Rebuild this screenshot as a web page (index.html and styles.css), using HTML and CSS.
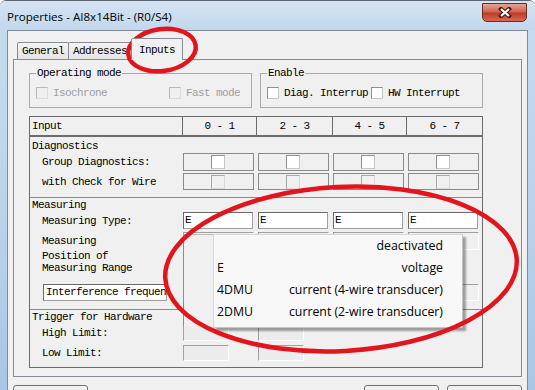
FILE: index.html
```html
<!DOCTYPE html>
<html lang="en">
<head>
  <meta charset="UTF-8" />
  <title>Properties - AI8x14Bit - (R0/S4)</title>
  <link rel="stylesheet" href="styles.css">
</head>
<body>
  <div class="window">
    <!-- Title bar -->
    <div class="titlebar">
      <span class="title">Properties - AI8x14Bit - (R0/S4)</span>
      <div class="close-btn">
        <svg width="14" height="11" viewBox="0 0 14 11">
          <path d="M3 2 L11 9 M11 2 L3 9" stroke="#4a1c16" stroke-width="4.2" stroke-linecap="square" />
          <path d="M3 2 L11 9 M11 2 L3 9" stroke="#ffffff" stroke-width="2.2" />
        </svg>
      </div>
    </div>

    <div class="client">
      <!-- Tabs -->
      <div class="tabs">
        <div class="tab">General</div>
        <div class="tab">Addresses</div>
        <div class="tab active">Inputs</div>
      </div>

      <div class="panel">
        <div class="groups">
          <fieldset class="group">
            <legend>Operating mode</legend>
            <div class="group-row">
              <label class="check disabled"><span class="box"></span>Isochrone</label>
              <label class="check disabled push"><span class="box"></span>Fast mode</label>
            </div>
          </fieldset>
          <fieldset class="group">
            <legend>Enable</legend>
            <div class="group-row">
              <label class="check"><span class="box"></span>Diag. Interrup</label>
              <label class="check tight"><span class="box"></span>HW Interrupt</label>
            </div>
          </fieldset>
        </div>

        <!-- Parameter sheet -->
        <div class="sheet">
          <div class="sheet-head">
            <div class="hcell">Input</div>
            <div class="hcell center">0 - 1</div>
            <div class="hcell center">2 - 3</div>
            <div class="hcell center">4 - 5</div>
            <div class="hcell center">6 - 7</div>
          </div>

          <div class="section diag">
            <div class="sec-title">Diagnostics</div>
            <div class="row">
              <div class="lbl">Group Diagnostics:</div>
              <div class="cell"><span class="box white"></span></div>
              <div class="cell"><span class="box white"></span></div>
              <div class="cell"><span class="box white"></span></div>
              <div class="cell"><span class="box white"></span></div>
            </div>
            <div class="row second">
              <div class="lbl">with Check for Wire</div>
              <div class="cell"><span class="box"></span></div>
              <div class="cell"><span class="box"></span></div>
              <div class="cell"><span class="box"></span></div>
              <div class="cell"><span class="box"></span></div>
            </div>
          </div>

          <div class="section meas">
            <div class="sec-title">Measuring</div>
            <div class="row type">
              <div class="lbl">Measuring Type:</div>
              <div class="field">E</div>
              <div class="field">E</div>
              <div class="field">E</div>
              <div class="field">E</div>
            </div>
            <div class="row range">
              <div class="lbl">Measuring</div>
              <div class="combo"></div>
              <div class="combo"></div>
              <div class="combo"></div>
              <div class="combo"></div>
            </div>
            <div class="row position">
              <div class="lbl">Position of<br>Measuring Range</div>
            </div>
            <div class="row interf">
              <div class="lbl"><div class="lbl-box">Interference frequen</div></div>
              <div class="combo"></div>
              <div class="combo"></div>
              <div class="combo"></div>
              <div class="combo"></div>
            </div>
          </div>

          <div class="section trig">
            <div class="sec-title">Trigger for Hardware</div>
            <div class="row limit">
              <div class="lbl">High Limit:</div>
              <div class="limit-cell"><span class="limit-box"></span></div>
              <div class="limit-cell"><span class="limit-box"></span></div>
            </div>
            <div class="row limit low">
              <div class="lbl">Low Limit:</div>
              <div class="limit-cell"><span class="limit-box"></span></div>
              <div class="limit-cell"><span class="limit-box"></span></div>
            </div>
          </div>
        </div>
      </div>

      <div class="buttons">
        <div class="btn"></div>
        <div class="btn push"></div>
        <div class="btn"></div>
      </div>
    </div>

    <!-- Open drop-down list of the measuring type -->
    <div class="dropdown">
      <div class="gutter"></div>
      <ul class="items">
        <li><span class="code"></span><span class="desc">deactivated</span></li>
        <li><span class="code">E</span><span class="desc">voltage</span></li>
        <li><span class="code">4DMU</span><span class="desc">current (4-wire transducer)</span></li>
        <li><span class="code">2DMU</span><span class="desc">current (2-wire transducer)</span></li>
      </ul>
    </div>

    <!-- Red hand-drawn marks -->
    <svg class="marks" width="535" height="390" viewBox="0 0 535 390">
      <ellipse cx="162" cy="49" rx="34" ry="21" transform="rotate(-8 162 49)" />
      <ellipse cx="341" cy="268" rx="176" ry="82" transform="rotate(-3 341 268)" />
    </svg>
  </div>
</body>
</html>
```

FILE: styles.css
```css
/* Win7 style property dialog */
body {
  margin: 0;
  padding: 0;
  background-color: #ffffff;
}
.window {
  position: relative;
  width: 535px;
  height: 390px;
  overflow: hidden;
  background: linear-gradient(to bottom, #c9dcf0, #b9d1ea 60%, #a9c6e6);
  border-top: 1px solid #5d6670;
  box-sizing: border-box;
  border-radius: 6px 6px 0 0;
}
.titlebar {
  height: 29px;
  display: flex;
  align-items: flex-start;
  background: linear-gradient(to bottom, #d5e4f4, #c2d7ee);
}
.title {
  padding: 9px 0 0 7px;
  font-family: "Open Sans", "Noto Sans", sans-serif;
  font-size: 11.6px;
  color: #000;
  line-height: 14px;
}
.close-btn {
  margin: 2px 8px 0 auto;
  width: 43px;
  height: 17px;
  border: 1px solid #6b2a22;
  border-radius: 0 0 5px 5px;
  background: linear-gradient(to bottom, #e7a597, #d4634f 45%, #c03d27 55%, #d7684f);
  display: flex;
  align-items: center;
  justify-content: center;
}

/* Dialog client area */
.client {
  margin: 0 7px;
  height: 370px;
  background-color: #f0f0f0;
  border: 1px solid #7f8c9b;
  border-bottom: none;
  padding-top: 7px;
  box-sizing: border-box;
  font-family: "Liberation Mono", "DejaVu Sans Mono", monospace;
  font-size: 11px;
  letter-spacing: -0.6px;
  color: #000;
}
.tabs {
  display: flex;
  align-items: flex-end;
  margin-left: 9px;
  height: 21px;
}
.tab {
  height: 17px;
  line-height: 16px;
  padding: 0 4px;
  border: 1px solid #898c95;
  border-bottom: none;
  border-radius: 2px 2px 0 0;
  background: linear-gradient(to bottom, #f3f3f3, #e5e5e5);
  box-sizing: border-box;
  margin-right: -1px;
}
.tab.active {
  position: relative;
  z-index: 1;
  height: 22px;
  margin-bottom: -1px;
  margin-left: 0;
  padding: 3px 7px 0;
  background: #f0f0f0;
}
.panel {
  margin-left: 5px;
  width: 509px;
  height: 318px;
  border: 1px solid #898c95;
  background: #f0f0f0;
  box-sizing: border-box;
  padding: 7px 0 0 15px;
}

/* Group boxes */
.groups {
  display: flex;
  gap: 8px;
}
.group {
  width: 223px;
  margin: 0;
  padding: 0 6px 6px 6px;
  border: 1px solid #a7abb0;
  box-sizing: border-box;
  height: 41px;
}
.group legend {
  padding: 0 1px;
  line-height: 12px;
}
.group-row {
  display: flex;
  align-items: center;
  margin-top: 8px;
}
.check {
  display: flex;
  align-items: center;
  gap: 4px;
  white-space: nowrap;
}
.check.disabled {
  color: #a0a0a0;
}
.check.push {
  margin-left: auto;
  margin-right: 5px;
}
.check.tight {
  margin-left: 3px;
}
.box {
  display: inline-block;
  width: 13px;
  height: 13px;
  border: 1px solid #8e8f8f;
  border-right-color: #c6c6c6;
  border-bottom-color: #c6c6c6;
  background: #ffffff;
  box-sizing: border-box;
  margin-right: 1px;
}
.check.disabled .box {
  background: #f0f0f0;
  border-color: #b8b8b8 #dcdcdc #dcdcdc #b8b8b8;
}
.check .box {
  width: 12px;
  height: 12px;
}

/* Sheet */
.sheet {
  margin-top: 8px;
  width: 454px;
  height: 252px;
  border: 1px solid #6c6c6c;
  box-sizing: border-box;
}
.sheet-head {
  display: grid;
  grid-template-columns: 152px 74px 76px 74px 1fr;
  height: 20px;
  border-bottom: 2px solid #6c6c6c;
  box-sizing: border-box;
}
.hcell {
  line-height: 18px;
  padding-left: 2px;
  border-left: 1px solid #6c6c6c;
}
.hcell:first-child {
  border-left: none;
}
.hcell.center {
  text-align: center;
  padding-left: 0;
}
.section {
  border-bottom: 1px solid #8c8c8c;
  box-sizing: border-box;
}
.section.diag {
  height: 61px;
}
.section.meas {
  height: 112px;
}
.section.trig {
  border-bottom: none;
}
.sec-title {
  padding-left: 2px;
  height: 16px;
  line-height: 18px;
}
.meas .sec-title,
.trig .sec-title {
  height: 14px;
  line-height: 14px;
}
.row {
  display: grid;
  grid-template-columns: 149px repeat(4, 71px);
  column-gap: 4px;
  height: 18px;
  align-items: center;
}
.row .lbl {
  padding-left: 12px;
  white-space: nowrap;
}
.row.second {
  margin-top: 2px;
  height: 17px;
}
.row.second .box {
  background: #f0f0f0;
  border-color: #a8a8a8 #d8d8d8 #d8d8d8 #a8a8a8;
}
.cell {
  height: 100%;
  border: 1px solid #8a8a8a;
  box-sizing: border-box;
  display: flex;
  align-items: center;
  justify-content: center;
}
.cell .box {
  width: 14px;
  height: 14px;
}
.row.type {
  height: 17px;
}
.field {
  width: 70px;
  height: 17px;
  background: #ffffff;
  border: 1px solid #a0a0a0;
  border-top-color: #6a6a6a;
  border-left-color: #6a6a6a;
  box-sizing: border-box;
  line-height: 15px;
  padding-left: 1px;
}
.combo {
  height: 100%;
  border: 1px solid #a0a0a0;
  border-right-color: #ffffff;
  border-bottom-color: #ffffff;
  box-sizing: border-box;
}
.row.range {
  margin-top: 3px;
}
.row.position {
  height: 24px;
  line-height: 12px;
}
.row.interf {
  margin-top: 10px;
  height: 17px;
}
.lbl-box {
  margin-left: 1px;
  width: 124px;
  height: 17px;
  background: #ffffff;
  border: 1px solid #a0a0a0;
  border-top-color: #6a6a6a;
  border-left-color: #6a6a6a;
  box-sizing: border-box;
  line-height: 15px;
  padding-left: 2px;
}
.row.interf .lbl {
  padding-left: 12px;
}
.row.limit {
  margin-top: 1px;
  height: 16px;
}
.row.low {
  margin-top: 4px;
}
.limit-cell {
  height: 100%;
}
.limit-box {
  display: block;
  width: 46px;
  height: 16px;
  border: 1px solid #a0a0a0;
  border-right-color: #ffffff;
  border-bottom-color: #ffffff;
  box-sizing: border-box;
  background: #ececec;
}

/* Dialog buttons (cut by the screenshot) */
.buttons {
  display: flex;
  gap: 8px;
  margin: 8px 0 0 5px;
  width: 509px;
}
.btn {
  width: 75px;
  height: 23px;
  border: 1px solid #707070;
  border-radius: 3px;
  background: linear-gradient(to bottom, #f2f2f2, #e6e6e6);
  box-sizing: border-box;
}
.btn.push {
  margin-left: auto;
}

/* Drop-down list */
.dropdown {
  position: absolute;
  left: 183px;
  top: 233px;
  display: flex;
  font-family: "Open Sans", "Noto Sans", sans-serif;
  font-size: 12.3px;
  color: #000;
}
.gutter {
  width: 30px;
  height: 92px;
  border-left: 1px solid #8c8c8c;
  border-top: 1px solid #b8b8b8;
  background: #f0f0f0;
  box-sizing: border-box;
}
.items {
  list-style: none;
  margin: 0;
  padding: 0 0 4px;
  width: 250px;
  background: #f8f8f8;
  border: 1px solid #d8d8d8;
  border-right-color: #c4c4c4;
  border-bottom-color: #c4c4c4;
  box-sizing: border-box;
  box-shadow: 3px 3px 2px rgba(0, 0, 0, 0.35);
}
.items li {
  display: flex;
  height: 22px;
  line-height: 22px;
  padding: 0 19px 0 3px;
}
.items .code {
  width: 60px;
}
.items .desc {
  margin-left: auto;
}

/* Red annotation ellipses */
.marks {
  position: absolute;
  left: 0;
  top: 0;
  pointer-events: none;
}
.marks ellipse {
  fill: none;
  stroke: #e3141c;
  stroke-width: 4.5;
}
```
